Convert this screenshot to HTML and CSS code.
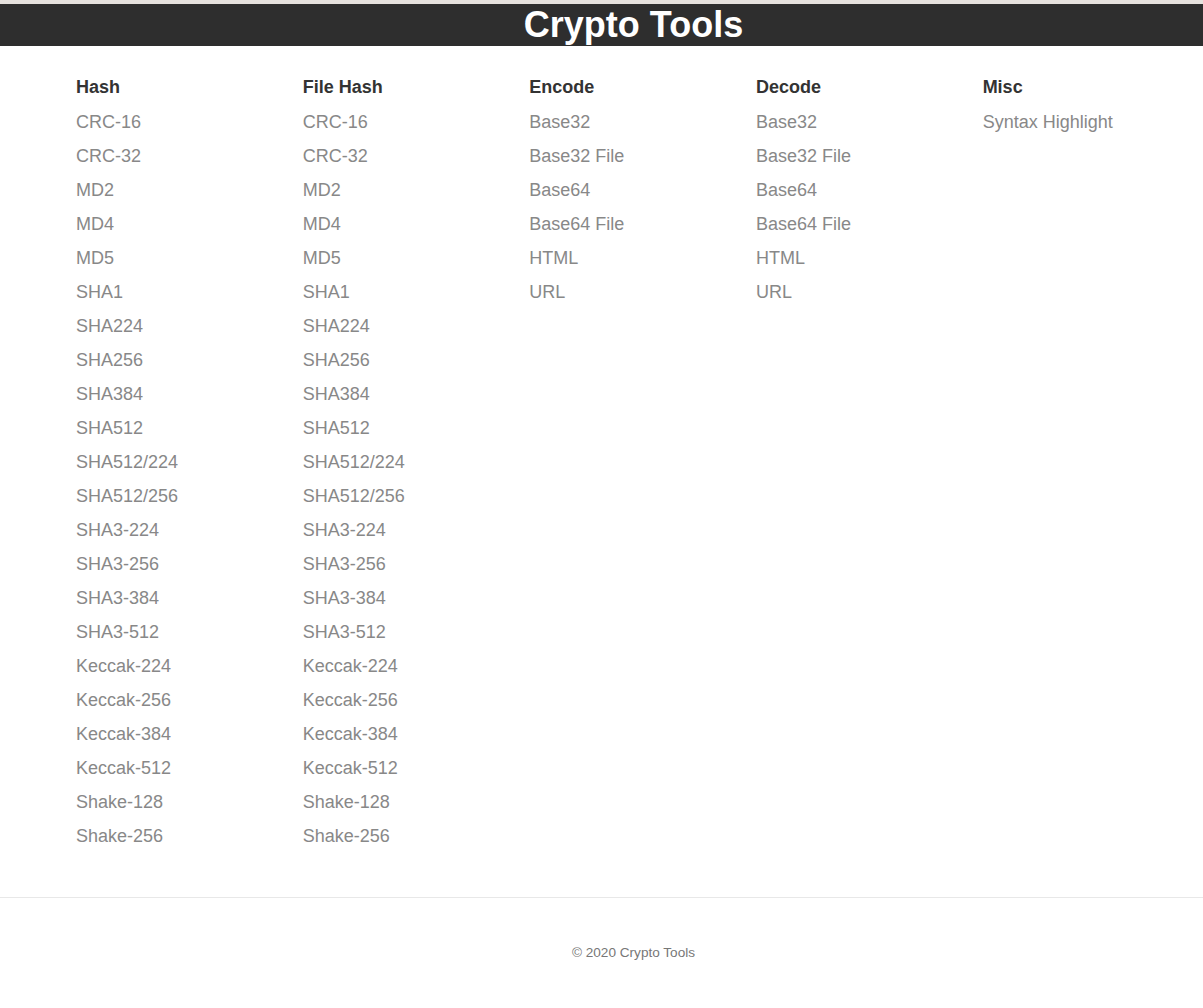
FILE: index.html
```html
<!DOCTYPE html>
<html lang="en">
<head>
<meta charset="utf-8">
<title>Crypto Tools</title>
<link rel="stylesheet" href="styles.css">
</head>
<body>
<header class="topbar">
  <h1 class="title">Crypto Tools</h1>
</header>
<main class="menu">
  <section class="col">
    <h2 class="col-head">Hash</h2>
    <ul class="links">
      <li>CRC-16</li><li>CRC-32</li><li>MD2</li><li>MD4</li><li>MD5</li><li>SHA1</li><li>SHA224</li><li>SHA256</li><li>SHA384</li><li>SHA512</li><li>SHA512/224</li><li>SHA512/256</li><li>SHA3-224</li><li>SHA3-256</li><li>SHA3-384</li><li>SHA3-512</li><li>Keccak-224</li><li>Keccak-256</li><li>Keccak-384</li><li>Keccak-512</li><li>Shake-128</li><li>Shake-256</li>
    </ul>
  </section>
  <section class="col">
    <h2 class="col-head">File Hash</h2>
    <ul class="links">
      <li>CRC-16</li><li>CRC-32</li><li>MD2</li><li>MD4</li><li>MD5</li><li>SHA1</li><li>SHA224</li><li>SHA256</li><li>SHA384</li><li>SHA512</li><li>SHA512/224</li><li>SHA512/256</li><li>SHA3-224</li><li>SHA3-256</li><li>SHA3-384</li><li>SHA3-512</li><li>Keccak-224</li><li>Keccak-256</li><li>Keccak-384</li><li>Keccak-512</li><li>Shake-128</li><li>Shake-256</li>
    </ul>
  </section>
  <section class="col">
    <h2 class="col-head">Encode</h2>
    <ul class="links">
      <li>Base32</li><li>Base32 File</li><li>Base64</li><li>Base64 File</li><li>HTML</li><li>URL</li>
    </ul>
  </section>
  <section class="col">
    <h2 class="col-head">Decode</h2>
    <ul class="links">
      <li>Base32</li><li>Base32 File</li><li>Base64</li><li>Base64 File</li><li>HTML</li><li>URL</li>
    </ul>
  </section>
  <section class="col">
    <h2 class="col-head">Misc</h2>
    <ul class="links">
      <li>Syntax Highlight</li>
    </ul>
  </section>
</main>
<footer class="footer">
  <p class="copy">© 2020 Crypto Tools</p>
</footer>
</body>
</html>
```
FILE: styles.css
```css
html, body {
  margin: 0;
  padding: 0;
  background: #fff;
  font-family: "Liberation Sans", Arial, sans-serif;
  overflow-x: hidden;
}
body {
  border-top: 4px solid #e6e2de;
}
.topbar {
  background: #2e2e2e;
  height: 42px;
  display: flex;
  align-items: center;
  justify-content: center;
  padding-left: 64px;
}
.title {
  margin: 0;
  color: #fff;
  font-size: 36px;
  font-weight: bold;
  line-height: 42px;
}
.menu {
  display: grid;
  grid-template-columns: repeat(5, 226.67px);
  padding: 24px 0 44px 76px;
}
.col-head {
  margin: 0;
  font-size: 18px;
  font-weight: bold;
  color: #333;
  line-height: 35px;
}
.links {
  list-style: none;
  margin: 0;
  padding: 0;
}
.links li {
  font-size: 18px;
  line-height: 34px;
  color: #888;
  white-space: nowrap;
}
.footer {
  border-top: 1px solid #e8e8e8;
  padding: 45px 0 0 64px;
  text-align: center;
}
.copy {
  margin: 0;
  font-size: 13.6px;
  line-height: 20px;
  color: #777;
}
```
